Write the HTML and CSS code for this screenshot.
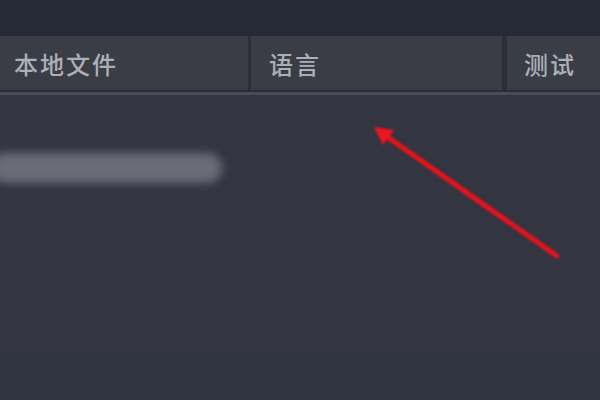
FILE: index.html
```html
<!DOCTYPE html>
<html lang="zh">

<head>
    <meta charset="UTF-8">
    <title>设置</title>
    <link rel="stylesheet" href="styles.css">
</head>

<body>
    <div class="topbar"></div>
    <div class="tabs">
        <div class="tab tab-1">本地文件</div>
        <div class="tab tab-2">语言</div>
        <div class="tab tab-3">测试</div>
    </div>
    <div class="rule"></div>
    <div class="content">
        <div class="blur-row"></div>
        <svg class="arrow" width="600" height="400" viewBox="0 0 600 400">
            <line x1="557" y1="256" x2="386" y2="136" stroke="#e8121c" stroke-width="5" stroke-linecap="round" />
            <polygon points="374,127 394,130 383,145" fill="#f0141e" />
        </svg>
        <div class="footer-band"></div>
    </div>
</body>

</html>
```

FILE: styles.css
```css
body {
    margin: 0;
    padding: 0;
    background-color: #333541;
    font-family: "Noto Sans CJK SC", "Noto Sans", sans-serif;
    width: 600px;
    height: 400px;
    overflow: hidden;
    position: relative;
}

.topbar {
    height: 36px;
    background-color: #262a35;
}

.tabs {
    display: flex;
    height: 54px;
    background-color: #2c2f38;
    gap: 3px;
}

.tab {
    background-color: #3a3d45;
    color: #aab0b7;
    font-size: 24px;
    font-weight: 500;
    letter-spacing: 2px;
    line-height: 56px;
    padding-left: 14px;
    box-sizing: border-box;
}

.tab-1 {
    width: 248px;
}

.tab-2 {
    width: 251px;
    padding-left: 18px;
}

.tab-3 {
    flex: 1;
    padding-left: 17px;
    margin-left: 2px;
}

.rule {
    height: 2px;
    background-color: #2a2d35;
    border-bottom: 3px solid #4a4d56;
}

.content {
    position: relative;
    height: 305px;
}

.blur-row {
    position: absolute;
    left: -10px;
    top: 58px;
    width: 232px;
    height: 30px;
    border-radius: 15px;
    background-color: #6a6d76;
    filter: blur(5px);
}

.arrow {
    position: absolute;
    left: 0;
    top: -95px;
    filter: blur(0.8px);
}

.footer-band {
    position: absolute;
    left: 0;
    right: 0;
    bottom: 0;
    height: 42px;
    background-color: #2f3640;
    filter: blur(3px);
}
```
